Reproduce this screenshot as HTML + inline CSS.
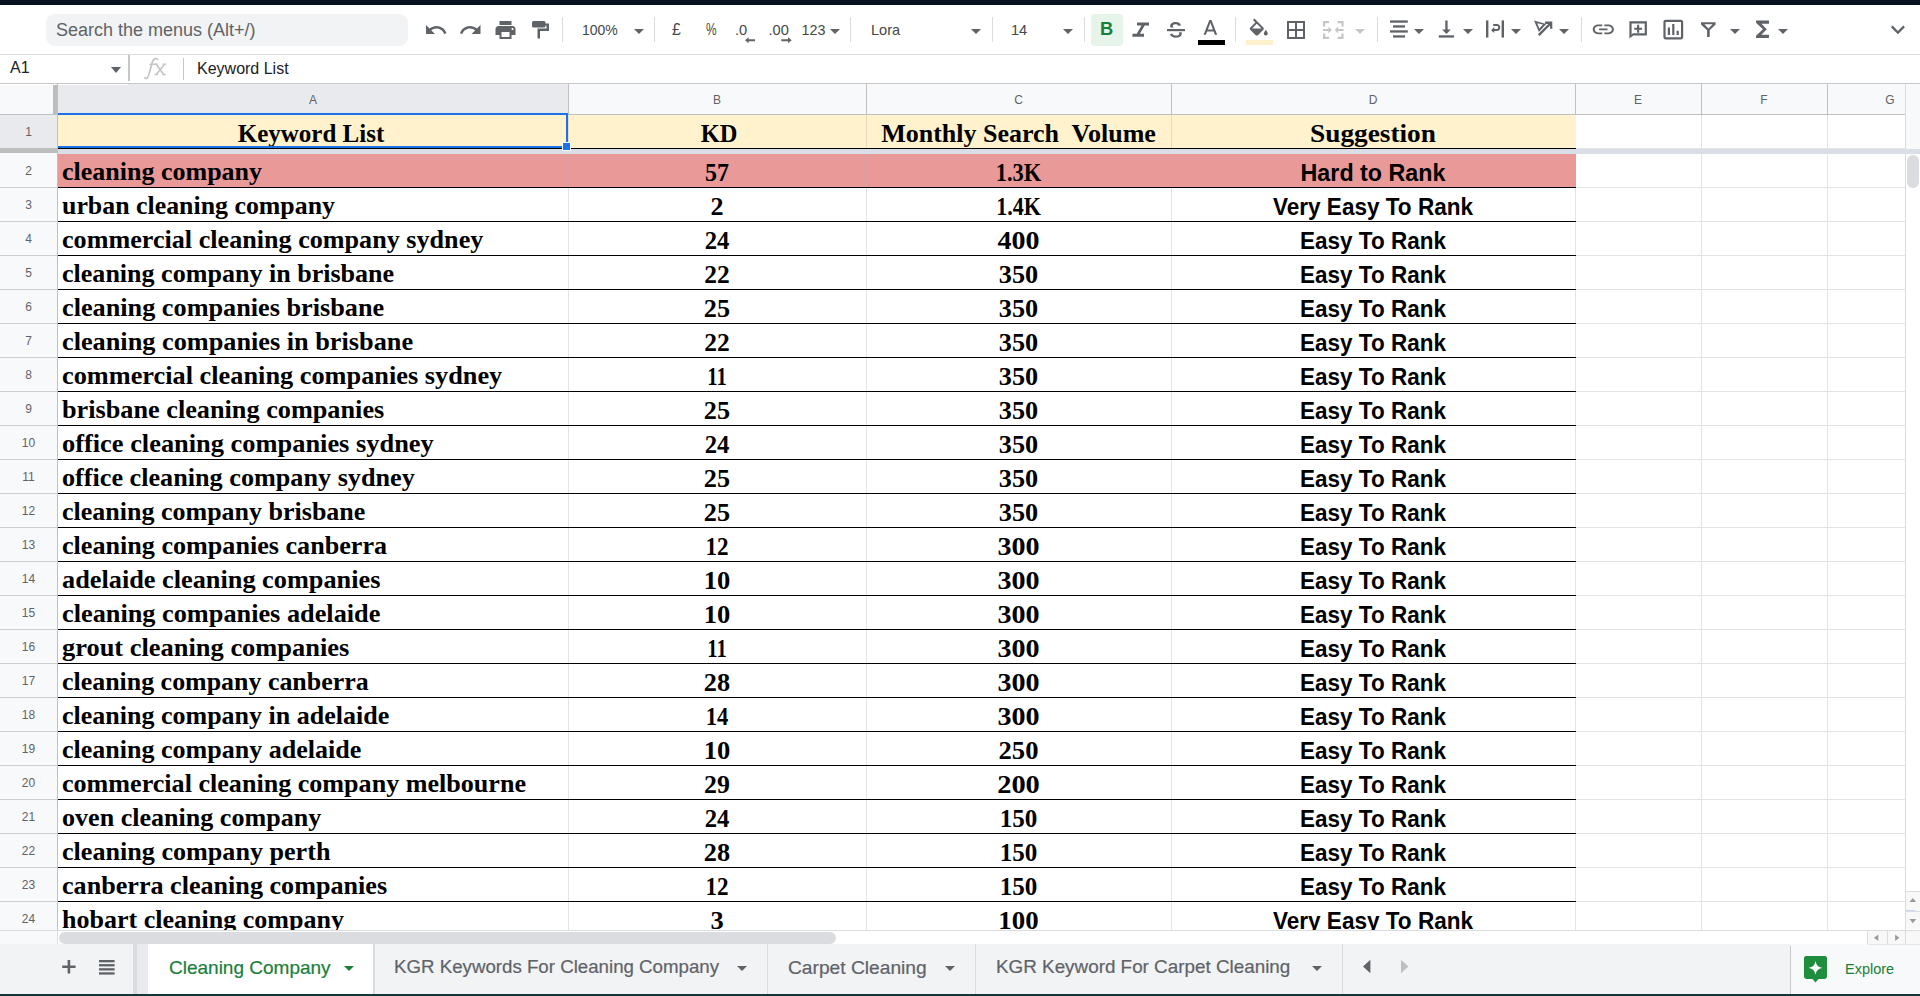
<!DOCTYPE html><html><head><meta charset="utf-8"><style>
*{box-sizing:border-box;margin:0;padding:0}
html,body{width:1920px;height:996px;overflow:hidden;background:#fff;position:relative;font-family:"Liberation Sans",sans-serif}
.a{position:absolute}
.t{position:absolute;white-space:nowrap;line-height:1}
.sep{position:absolute;width:1px;background:#dadce0;top:17px;height:25px}
.dd{position:absolute;width:0;height:0;border-left:5px solid transparent;border-right:5px solid transparent;border-top:5px solid #5f6368}
.cellA{position:absolute;white-space:nowrap;font-family:"Liberation Serif",serif;font-weight:bold;font-size:26px;color:#000;line-height:1}
.cellN{position:absolute;white-space:nowrap;font-family:"Liberation Serif",serif;font-weight:bold;font-size:25px;color:#000;line-height:1;text-align:center}
.cellD{position:absolute;white-space:nowrap;font-family:"Liberation Sans",sans-serif;font-weight:bold;font-size:23px;color:#000;line-height:1;text-align:center}
.rn{position:absolute;left:0;width:57px;text-align:center;font-size:12px;color:#5f6368;line-height:1}
.ch{position:absolute;top:94px;text-align:center;font-size:12px;color:#5f6368;line-height:1}
svg{position:absolute;overflow:visible}
</style></head><body>

<div class="a" style="left:0;top:0;width:1920px;height:5px;background:#08111f"></div>
<div class="a" style="left:0;top:54px;width:1920px;height:1px;background:#dadce0"></div>
<div class="a" style="left:46px;top:14px;width:362px;height:32px;border-radius:9px;background:#f1f3f4"></div>
<div class="t" style="left:56px;top:21px;font-size:18px;color:#5f6368">Search the menus (Alt+/)</div>
<div class="sep" style="left:562px"></div>
<div class="sep" style="left:654px"></div>
<div class="sep" style="left:850px"></div>
<div class="sep" style="left:992px"></div>
<div class="sep" style="left:1084px"></div>
<div class="sep" style="left:1235px"></div>
<div class="sep" style="left:1377px"></div>
<div class="sep" style="left:1581px"></div>
<div class="t" style="left:582px;top:23px;font-size:14px;color:#444746">100%</div>
<div class="dd" style="left:634px;top:29px"></div>
<div class="t" style="left:672px;top:22px;font-size:16px;color:#444746">&#163;</div>
<div class="t" style="left:706px;top:20.6px;font-size:16.5px;color:#444746;transform:scaleX(0.72);transform-origin:0 0">%</div>
<div class="t" style="left:735px;top:22.5px;font-size:14.6px;color:#444746">.0</div>
<div class="t" style="left:768.5px;top:22.5px;font-size:14.6px;color:#444746">.00</div>
<div class="t" style="left:801.5px;top:22.5px;font-size:14.3px;color:#444746">123</div>
<div class="dd" style="left:830px;top:29px"></div>
<div class="t" style="left:871px;top:23px;font-size:14.6px;color:#444746">Lora</div>
<div class="dd" style="left:971px;top:29px"></div>
<div class="t" style="left:1011px;top:23px;font-size:14.6px;color:#444746">14</div>
<div class="dd" style="left:1063px;top:29px"></div>
<div class="a" style="left:1091px;top:14px;width:32px;height:32px;border-radius:4px;background:#e6f4ea"></div>
<div class="t" style="left:1100px;top:20px;font-size:18.3px;font-weight:bold;color:#188038">B</div>
<div class="a" style="left:1198px;top:40px;width:27px;height:5px;background:#000"></div>
<div class="a" style="left:1246px;top:40px;width:27px;height:5px;background:#fef0cd"></div>
<div class="dd" style="left:1355px;top:29px;border-top-color:#c4c7c5"></div>
<div class="dd" style="left:1414px;top:29px"></div>
<div class="dd" style="left:1463px;top:29px"></div>
<div class="dd" style="left:1511px;top:29px"></div>
<div class="dd" style="left:1559px;top:29px"></div>
<div class="dd" style="left:1730px;top:29px"></div>
<div class="dd" style="left:1778px;top:29px"></div>
<svg style="left:0;top:0" width="1920" height="55" viewBox="0 0 1920 55" fill="#5f6368">
<path transform="translate(424,18)" d="M12.5 8c-2.65 0-5.05.99-6.9 2.6L2 7v9h9l-3.62-3.62c1.39-1.16 3.16-1.88 5.12-1.88 3.54 0 6.55 2.31 7.6 5.5l2.37-.78C21.08 11.030 17.15 8 12.5 8z"/>
<path transform="translate(458.5,18)" d="M18.4 10.6C16.55 8.99 14.15 8 11.5 8c-4.65 0-8.58 3.03-9.960 7.22L3.9 16c1.05-3.19 4.05-5.5 7.6-5.5 1.95 0 3.73.72 5.12 1.88L13 16h9V7l-3.6 3.6z"/>
<path transform="translate(493.5,18)" d="M19 8H5c-1.66 0-3 1.34-3 3v6h4v4h12v-4h4v-6c0-1.66-1.34-3-3-3zm-3 11H8v-5h8v5zm3-7c-.55 0-1-.45-1-1s.45-1 1-1 1 .45 1 1-.45 1-1 1zm-1-9H6v4h12V3z"/>
<path d="M533.5 21h10.5a1.5 1.5 0 0 1 1.5 1.5v.9h3.5v7.6h-9v7.5h-2.5v-10h9v-3.1h-1v.6a1.5 1.5 0 0 1-1.5 1.5h-10.5a1.5 1.5 0 0 1-1.5-1.5v-3.5a1.5 1.5 0 0 1 1.5-1.5z"/>
<path d="M745 40.25l3.6-3v1.9h6.4v2.2h-6.4v1.9z"/>
<path d="M791.7 40.25l-3.6-3v1.9h-6.8v2.2h6.8v1.9z"/>
<path d="M1137 22.5h12v2.9h-4.3l-4.8 8.4h4.1v2.9h-11.6v-2.9h4.3l4.8-8.4h-4.5z"/>
<rect x="1167" y="29" width="18" height="2.2"/>
<path d="M1170.6 27.6c-.3-.5-.4-1.1-.4-1.7 0-2.3 2.300-3.9 5.500-3.900 2.600 0 4.600 1.100 5.300 3.200l-2.4.8c-.5-1.200-1.600-1.800-3-1.800-1.700 0-2.800.7-2.800 1.700 0 .6.300 1.100 1.100 1.500z"/>
<path d="M1178.6 32.2c.5.4.7.9.7 1.5 0 1.100-1.200 1.900-3.300 1.900-1.800 0-3.200-.8-3.700-2.200l-2.4.9c.8 2.100 3 3.500 6.100 3.500 3.500 0 5.800-1.700 5.800-4.200 0-.5-.1-1-.3-1.400z"/>
<path transform="translate(1197.8,16.8) scale(1.05)" d="M11 3L5.5 17h2.25l1.12-3h6.25l1.12 3h2.25L13 3h-2zm-1.38 9L12 5.670 14.38 12H9.62z"/>
<path transform="translate(1246.8,18.6)" d="M16.56 8.94L7.62 0 6.21 1.41l2.38 2.38-5.15 5.15c-.59.59-.59 1.54 0 2.12l5.5 5.5c.29.29.68.44 1.06.44s.77-.15 1.06-.44l5.5-5.5c.59-.58.59-1.53 0-2.12zM5.21 10L10 5.21 14.79 10H5.21zM19 11.5s-2 2.17-2 3.5c0 1.1.9 2 2 2s2-.9 2-2c0-1.33-2-3.5-2-3.5z"/>
<path transform="translate(1284,18)" d="M3 3v18h18V3H3zm8 16H5v-6h6v6zm0-8H5V5h6v6zm8 8h-6v-6h6v6zm0-8h-6V5h6v6z"/>
<g fill="#c4c7c5">
<path d="M1323 21h6v2.2h-3.8v3.3h-2.2z M1343.6 21h-6v2.2h3.8v3.3h2.2z M1323 39h6v-2.2h-3.8v-3.3h-2.2z M1343.6 39h-6v-2.2h3.8v-3.3h2.2z"/>
<path d="M1323 28.9h5.5v-2.4l3.3 3.5-3.3 3.5v-2.4h-5.5z M1343.6 28.9h-5.5v-2.4l-3.3 3.5 3.3 3.5v-2.4h5.5z"/>
</g>
<rect x="1390" y="20.4" width="17.8" height="2.3"/><rect x="1393" y="25.3" width="12" height="2.3"/><rect x="1390" y="30.3" width="17.8" height="2.3"/><rect x="1393" y="35.3" width="12" height="2.3"/>
<path d="M1445.3 20.4h2.3v9.2h3.2l-4.35 4.3-4.35-4.3h3.2z"/><rect x="1438.8" y="35.3" width="15.2" height="2.3"/>
<rect x="1486" y="20.4" width="2.4" height="17.2"/><rect x="1501.6" y="20.4" width="2.4" height="17.2"/>
<path d="M1491 30.2l3.3-3.3v2.1h2.7c.7 0 1.2-.5 1.2-1.2v-.6c0-.7-.5-1.2-1.2-1.2h-3.8v-2h3.8c1.8 0 3.2 1.400 3.2 3.200v.6c0 1.8-1.4 3.2-3.2 3.2h-2.7v2.1z"/>
<path d="M1534 20.4l12.2 3.6-7.3 8.1z M1537.3 23.3l2 5.3 3.7-4.1z" fill-rule="evenodd"/>
<path d="M1539.6 36l10.4-10.4v3.2h2.3v-7.200h-7.200v2.300h3.200l-10.400 10.400z"/>
<path transform="translate(1590.6,17.6) scale(1.06,0.98)" d="M3.9 12c0-1.71 1.39-3.1 3.1-3.1h4V7H7c-2.76 0-5 2.24-5 5s2.24 5 5 5h4v-1.9H7c-1.71 0-3.1-1.39-3.1-3.1zM8 13h8v-2H8v2zm9-6h-4v1.9h4c1.71 0 3.1 1.39 3.1 3.1s-1.39 3.1-3.1 3.1h-4V17h4c2.76 0 5-2.24 5-5s-2.24-5-5-5z"/>
<path d="M1629.4 21.2h17.5v14.300h-13.700l-3.800 3.000z M1631.600 23.400v11.300l1.200-1.400h11.900v-9.900z" fill-rule="evenodd"/>
<path d="M1637.1 24.8h2.1v2.9h2.9v2.1h-2.9v2.9h-2.1v-2.900h-2.900v-2.100h2.900z"/>
<path transform="translate(1660.1,16.4) scale(1.1)" d="M9 17H7v-7h2v7zm4 0h-2V7h2v10zm4 0h-2v-4h2v4zm2 2H5V5h14v14zm0-16H5c-1.1 0-2 .9-2 2v14c0 1.1.9 2 2 2h14c1.1 0 2-.9 2-2V5c0-1.1-.9-2-2-2z"/>
<path d="M1701 22.2h14.6v2.2l-5.9 5.9v6.6h-2.6v-6.6l-6.1-5.900z M1704.400 24.300l4.100 4.100 4.100-4.100z" fill-rule="evenodd"/>
<path transform="translate(1749.5,16.3) scale(1.08)" d="M18 4H6v2l6.5 6L6 18v2h12v-3h-7l5-5-5-5h7z"/>
<path transform="translate(1884,15.6) scale(1.16)" d="M16.59 8.59L12 13.17 7.41 8.59 6 10l6 6 6-6z"/>
</svg>
<div class="a" style="left:0;top:83px;width:1920px;height:1px;background:#c7c7c7"></div>
<div class="t" style="left:10px;top:60px;font-size:16px;color:#202124">A1</div>
<div class="dd" style="left:111px;top:67px;border-top-color:#5f6368;border-left-width:5px;border-right-width:5px;border-top-width:6px"></div>
<div class="a" style="left:128px;top:55px;width:2px;height:26px;background:#c7c7c7"></div>
<div class="a" style="left:183px;top:58px;width:1px;height:22px;background:#c7c7c7"></div>
<svg style="left:0;top:0" width="200" height="84" viewBox="0 0 200 84" fill="none" stroke="#c4c4c4"><path d="M144.3 77.2c.7 1.3 2 1.6 3 .7 1-.9 1.5-2.6 2-5l3.1-10.8c.6-2.2 1.700-3.600 3.300-3.600 1.100 0 1.900.5 2.400 1.300" stroke-width="1.7"/><path d="M149.3 64.3h6.2" stroke-width="1.3"/><path d="M156.2 64.2l7.6 10.300M164.600 64.200l-8.400 10.300" stroke-width="1.6"/><path d="M154.6 64.1h3.2M162.6 64.1h3.6M154.4 74.6h3.4M162.4 74.6h3.4" stroke-width="1.1"/></svg>
<div class="t" style="left:197px;top:61px;font-size:16px;color:#202124">Keyword List</div>
<div class="a" style="left:0;top:84px;width:1905px;height:30px;background:#f8f9fa"></div>
<div class="a" style="left:58px;top:84px;width:510px;height:30px;background:#e8eaed"></div>
<div class="a" style="left:0;top:114px;width:1905px;height:1px;background:#c0c0c0"></div>
<div class="a" style="left:568px;top:84px;width:1px;height:30px;background:#c0c0c0"></div>
<div class="a" style="left:866px;top:84px;width:1px;height:30px;background:#c0c0c0"></div>
<div class="a" style="left:1171px;top:84px;width:1px;height:30px;background:#c0c0c0"></div>
<div class="a" style="left:1575px;top:84px;width:1px;height:30px;background:#c0c0c0"></div>
<div class="a" style="left:1701px;top:84px;width:1px;height:30px;background:#c0c0c0"></div>
<div class="a" style="left:1827px;top:84px;width:1px;height:30px;background:#c0c0c0"></div>
<div class="ch" style="left:58px;width:510px">A</div>
<div class="ch" style="left:568px;width:298px">B</div>
<div class="ch" style="left:866px;width:305px">C</div>
<div class="ch" style="left:1171px;width:404px">D</div>
<div class="ch" style="left:1575px;width:126px">E</div>
<div class="ch" style="left:1701px;width:126px">F</div>
<div class="ch" style="left:1827px;width:126px">G</div>
<div class="a" style="left:0;top:84px;width:128px;height:1px;background:#fff"></div>
<div class="a" style="left:0;top:115px;width:57px;height:815px;background:#f8f9fa"></div>
<div class="a" style="left:0;top:115px;width:57px;height:33px;background:#e8eaed"></div>
<div class="a" style="left:57px;top:84px;width:1px;height:846px;background:#c0c0c0"></div>
<div class="a" style="left:53px;top:85px;width:4px;height:29px;background:#bdbdbd"></div>
<div class="a" style="left:0;top:148px;width:57px;height:5px;background:#bdbdbd"></div>
<div class="a" style="left:568px;top:115px;width:1px;height:34px;background:#e2e3e3"></div>
<div class="a" style="left:568px;top:154px;width:1px;height:776px;background:#e2e3e3"></div>
<div class="a" style="left:866px;top:115px;width:1px;height:34px;background:#e2e3e3"></div>
<div class="a" style="left:866px;top:154px;width:1px;height:776px;background:#e2e3e3"></div>
<div class="a" style="left:1171px;top:115px;width:1px;height:34px;background:#e2e3e3"></div>
<div class="a" style="left:1171px;top:154px;width:1px;height:776px;background:#e2e3e3"></div>
<div class="a" style="left:1575px;top:115px;width:1px;height:34px;background:#e2e3e3"></div>
<div class="a" style="left:1575px;top:154px;width:1px;height:776px;background:#e2e3e3"></div>
<div class="a" style="left:1701px;top:115px;width:1px;height:34px;background:#e2e3e3"></div>
<div class="a" style="left:1701px;top:154px;width:1px;height:776px;background:#e2e3e3"></div>
<div class="a" style="left:1827px;top:115px;width:1px;height:34px;background:#e2e3e3"></div>
<div class="a" style="left:1827px;top:154px;width:1px;height:776px;background:#e2e3e3"></div>
<div class="a" style="left:58px;top:115px;width:1518px;height:33px;background:#fff2cc"></div>
<div class="a" style="left:58px;top:148px;width:1518px;height:1px;background:#000"></div>
<div class="a" style="left:1576px;top:148px;width:329px;height:1px;background:#e2e3e3"></div>
<div class="a" style="left:58px;top:149px;width:1847px;height:5px;background:#dadfe7"></div>
<div class="rn" style="top:126px">1</div>
<div class="a" style="left:568px;top:115px;width:1px;height:33px;background:#e6dcc0"></div>
<div class="a" style="left:866px;top:115px;width:1px;height:33px;background:#e6dcc0"></div>
<div class="a" style="left:1171px;top:115px;width:1px;height:33px;background:#e6dcc0"></div>
<div class="a" style="left:58px;top:154px;width:1518px;height:33px;background:#ea9999"></div>
<div class="a" style="left:568px;top:154px;width:1px;height:33px;background:#d8a0a0"></div>
<div class="a" style="left:866px;top:154px;width:1px;height:33px;background:#d8a0a0"></div>
<div class="a" style="left:1171px;top:154px;width:1px;height:33px;background:#d8a0a0"></div>
<div class="a" style="left:58px;top:187px;width:1518px;height:1px;background:#000"></div>
<div class="a" style="left:1576px;top:187px;width:329px;height:1px;background:#e2e3e3"></div>
<div class="a" style="left:0;top:187px;width:57px;height:1px;background:#cdcdcd"></div>
<div class="rn" style="top:165px">2</div>
<div class="cellA" style="left:62px;top:159px;transform:scaleX(1.0);transform-origin:1px 0">cleaning company</div>
<div class="cellN" style="left:568px;width:298px;top:160px;transform:scaleX(0.957)">57</div>
<div class="cellN" style="left:866px;width:305px;top:160px;transform:scaleX(0.9)">1.3K</div>
<div class="cellD" style="left:1171px;width:404px;top:162px;transform:scaleX(1.012)">Hard to Rank</div>
<div class="a" style="left:58px;top:221px;width:1518px;height:1px;background:#000"></div>
<div class="a" style="left:1576px;top:221px;width:329px;height:1px;background:#e2e3e3"></div>
<div class="a" style="left:0;top:221px;width:57px;height:1px;background:#cdcdcd"></div>
<div class="rn" style="top:199px">3</div>
<div class="cellA" style="left:62px;top:193px;transform:scaleX(0.9945);transform-origin:1px 0">urban cleaning company</div>
<div class="cellN" style="left:568px;width:298px;top:194px;transform:scaleX(1.045)">2</div>
<div class="cellN" style="left:866px;width:305px;top:194px;transform:scaleX(0.881)">1.4K</div>
<div class="cellD" style="left:1171px;width:404px;top:196px;transform:scaleX(0.98)">Very Easy To Rank</div>
<div class="a" style="left:58px;top:255px;width:1518px;height:1px;background:#000"></div>
<div class="a" style="left:1576px;top:255px;width:329px;height:1px;background:#e2e3e3"></div>
<div class="a" style="left:0;top:255px;width:57px;height:1px;background:#cdcdcd"></div>
<div class="rn" style="top:233px">4</div>
<div class="cellA" style="left:62px;top:227px;transform:scaleX(1.0053);transform-origin:1px 0">commercial cleaning company sydney</div>
<div class="cellN" style="left:568px;width:298px;top:228px;transform:scaleX(0.988)">24</div>
<div class="cellN" style="left:866px;width:305px;top:228px;transform:scaleX(1.12)">400</div>
<div class="cellD" style="left:1171px;width:404px;top:230px;transform:scaleX(0.978)">Easy To Rank</div>
<div class="a" style="left:58px;top:289px;width:1518px;height:1px;background:#000"></div>
<div class="a" style="left:1576px;top:289px;width:329px;height:1px;background:#e2e3e3"></div>
<div class="a" style="left:0;top:289px;width:57px;height:1px;background:#cdcdcd"></div>
<div class="rn" style="top:267px">5</div>
<div class="cellA" style="left:62px;top:261px;transform:scaleX(1.0018);transform-origin:1px 0">cleaning company in brisbane</div>
<div class="cellN" style="left:568px;width:298px;top:262px;transform:scaleX(1.02)">22</div>
<div class="cellN" style="left:866px;width:305px;top:262px;transform:scaleX(1.05)">350</div>
<div class="cellD" style="left:1171px;width:404px;top:264px;transform:scaleX(0.978)">Easy To Rank</div>
<div class="a" style="left:58px;top:323px;width:1518px;height:1px;background:#000"></div>
<div class="a" style="left:1576px;top:323px;width:329px;height:1px;background:#e2e3e3"></div>
<div class="a" style="left:0;top:323px;width:57px;height:1px;background:#cdcdcd"></div>
<div class="rn" style="top:301px">6</div>
<div class="cellA" style="left:62px;top:295px;transform:scaleX(1.0094);transform-origin:1px 0">cleaning companies brisbane</div>
<div class="cellN" style="left:568px;width:298px;top:296px;transform:scaleX(1.05)">25</div>
<div class="cellN" style="left:866px;width:305px;top:296px;transform:scaleX(1.05)">350</div>
<div class="cellD" style="left:1171px;width:404px;top:298px;transform:scaleX(0.978)">Easy To Rank</div>
<div class="a" style="left:58px;top:357px;width:1518px;height:1px;background:#000"></div>
<div class="a" style="left:1576px;top:357px;width:329px;height:1px;background:#e2e3e3"></div>
<div class="a" style="left:0;top:357px;width:57px;height:1px;background:#cdcdcd"></div>
<div class="rn" style="top:335px">7</div>
<div class="cellA" style="left:62px;top:329px;transform:scaleX(1.0104);transform-origin:1px 0">cleaning companies in brisbane</div>
<div class="cellN" style="left:568px;width:298px;top:330px;transform:scaleX(1.02)">22</div>
<div class="cellN" style="left:866px;width:305px;top:330px;transform:scaleX(1.05)">350</div>
<div class="cellD" style="left:1171px;width:404px;top:332px;transform:scaleX(0.978)">Easy To Rank</div>
<div class="a" style="left:58px;top:391px;width:1518px;height:1px;background:#000"></div>
<div class="a" style="left:1576px;top:391px;width:329px;height:1px;background:#e2e3e3"></div>
<div class="a" style="left:0;top:391px;width:57px;height:1px;background:#cdcdcd"></div>
<div class="rn" style="top:369px">8</div>
<div class="cellA" style="left:62px;top:363px;transform:scaleX(1.0122);transform-origin:1px 0">commercial cleaning companies sydney</div>
<div class="cellN" style="left:568px;width:298px;top:364px;transform:scaleX(0.825)">11</div>
<div class="cellN" style="left:866px;width:305px;top:364px;transform:scaleX(1.05)">350</div>
<div class="cellD" style="left:1171px;width:404px;top:366px;transform:scaleX(0.978)">Easy To Rank</div>
<div class="a" style="left:58px;top:425px;width:1518px;height:1px;background:#000"></div>
<div class="a" style="left:1576px;top:425px;width:329px;height:1px;background:#e2e3e3"></div>
<div class="a" style="left:0;top:425px;width:57px;height:1px;background:#cdcdcd"></div>
<div class="rn" style="top:403px">9</div>
<div class="cellA" style="left:62px;top:397px;transform:scaleX(1.0094);transform-origin:1px 0">brisbane cleaning companies</div>
<div class="cellN" style="left:568px;width:298px;top:398px;transform:scaleX(1.05)">25</div>
<div class="cellN" style="left:866px;width:305px;top:398px;transform:scaleX(1.05)">350</div>
<div class="cellD" style="left:1171px;width:404px;top:400px;transform:scaleX(0.978)">Easy To Rank</div>
<div class="a" style="left:58px;top:459px;width:1518px;height:1px;background:#000"></div>
<div class="a" style="left:1576px;top:459px;width:329px;height:1px;background:#e2e3e3"></div>
<div class="a" style="left:0;top:459px;width:57px;height:1px;background:#cdcdcd"></div>
<div class="rn" style="top:437px">10</div>
<div class="cellA" style="left:62px;top:431px;transform:scaleX(1.0153);transform-origin:1px 0">office cleaning companies sydney</div>
<div class="cellN" style="left:568px;width:298px;top:432px;transform:scaleX(0.988)">24</div>
<div class="cellN" style="left:866px;width:305px;top:432px;transform:scaleX(1.05)">350</div>
<div class="cellD" style="left:1171px;width:404px;top:434px;transform:scaleX(0.978)">Easy To Rank</div>
<div class="a" style="left:58px;top:493px;width:1518px;height:1px;background:#000"></div>
<div class="a" style="left:1576px;top:493px;width:329px;height:1px;background:#e2e3e3"></div>
<div class="a" style="left:0;top:493px;width:57px;height:1px;background:#cdcdcd"></div>
<div class="rn" style="top:471px">11</div>
<div class="cellA" style="left:62px;top:465px;transform:scaleX(1.0072);transform-origin:1px 0">office cleaning company sydney</div>
<div class="cellN" style="left:568px;width:298px;top:466px;transform:scaleX(1.05)">25</div>
<div class="cellN" style="left:866px;width:305px;top:466px;transform:scaleX(1.05)">350</div>
<div class="cellD" style="left:1171px;width:404px;top:468px;transform:scaleX(0.978)">Easy To Rank</div>
<div class="a" style="left:58px;top:527px;width:1518px;height:1px;background:#000"></div>
<div class="a" style="left:1576px;top:527px;width:329px;height:1px;background:#e2e3e3"></div>
<div class="a" style="left:0;top:527px;width:57px;height:1px;background:#cdcdcd"></div>
<div class="rn" style="top:505px">12</div>
<div class="cellA" style="left:62px;top:499px;transform:scaleX(1.0);transform-origin:1px 0">cleaning company brisbane</div>
<div class="cellN" style="left:568px;width:298px;top:500px;transform:scaleX(1.05)">25</div>
<div class="cellN" style="left:866px;width:305px;top:500px;transform:scaleX(1.05)">350</div>
<div class="cellD" style="left:1171px;width:404px;top:502px;transform:scaleX(0.978)">Easy To Rank</div>
<div class="a" style="left:58px;top:561px;width:1518px;height:1px;background:#000"></div>
<div class="a" style="left:1576px;top:561px;width:329px;height:1px;background:#e2e3e3"></div>
<div class="a" style="left:0;top:561px;width:57px;height:1px;background:#cdcdcd"></div>
<div class="rn" style="top:539px">13</div>
<div class="cellA" style="left:62px;top:533px;transform:scaleX(1.0047);transform-origin:1px 0">cleaning companies canberra</div>
<div class="cellN" style="left:568px;width:298px;top:534px;transform:scaleX(0.924)">12</div>
<div class="cellN" style="left:866px;width:305px;top:534px;transform:scaleX(1.124)">300</div>
<div class="cellD" style="left:1171px;width:404px;top:536px;transform:scaleX(0.978)">Easy To Rank</div>
<div class="a" style="left:58px;top:595px;width:1518px;height:1px;background:#000"></div>
<div class="a" style="left:1576px;top:595px;width:329px;height:1px;background:#e2e3e3"></div>
<div class="a" style="left:0;top:595px;width:57px;height:1px;background:#cdcdcd"></div>
<div class="rn" style="top:573px">14</div>
<div class="cellA" style="left:62px;top:567px;transform:scaleX(1.0112);transform-origin:1px 0">adelaide cleaning companies</div>
<div class="cellN" style="left:568px;width:298px;top:568px;transform:scaleX(1.062)">10</div>
<div class="cellN" style="left:866px;width:305px;top:568px;transform:scaleX(1.124)">300</div>
<div class="cellD" style="left:1171px;width:404px;top:570px;transform:scaleX(0.978)">Easy To Rank</div>
<div class="a" style="left:58px;top:629px;width:1518px;height:1px;background:#000"></div>
<div class="a" style="left:1576px;top:629px;width:329px;height:1px;background:#e2e3e3"></div>
<div class="a" style="left:0;top:629px;width:57px;height:1px;background:#cdcdcd"></div>
<div class="rn" style="top:607px">15</div>
<div class="cellA" style="left:62px;top:601px;transform:scaleX(1.0112);transform-origin:1px 0">cleaning companies adelaide</div>
<div class="cellN" style="left:568px;width:298px;top:602px;transform:scaleX(1.062)">10</div>
<div class="cellN" style="left:866px;width:305px;top:602px;transform:scaleX(1.124)">300</div>
<div class="cellD" style="left:1171px;width:404px;top:604px;transform:scaleX(0.978)">Easy To Rank</div>
<div class="a" style="left:58px;top:663px;width:1518px;height:1px;background:#000"></div>
<div class="a" style="left:1576px;top:663px;width:329px;height:1px;background:#e2e3e3"></div>
<div class="a" style="left:0;top:663px;width:57px;height:1px;background:#cdcdcd"></div>
<div class="rn" style="top:641px">16</div>
<div class="cellA" style="left:62px;top:635px;transform:scaleX(1.0167);transform-origin:1px 0">grout cleaning companies</div>
<div class="cellN" style="left:568px;width:298px;top:636px;transform:scaleX(0.825)">11</div>
<div class="cellN" style="left:866px;width:305px;top:636px;transform:scaleX(1.124)">300</div>
<div class="cellD" style="left:1171px;width:404px;top:638px;transform:scaleX(0.978)">Easy To Rank</div>
<div class="a" style="left:58px;top:697px;width:1518px;height:1px;background:#000"></div>
<div class="a" style="left:1576px;top:697px;width:329px;height:1px;background:#e2e3e3"></div>
<div class="a" style="left:0;top:697px;width:57px;height:1px;background:#cdcdcd"></div>
<div class="rn" style="top:675px">17</div>
<div class="cellA" style="left:62px;top:669px;transform:scaleX(0.9967);transform-origin:1px 0">cleaning company canberra</div>
<div class="cellN" style="left:568px;width:298px;top:670px;transform:scaleX(1.05)">28</div>
<div class="cellN" style="left:866px;width:305px;top:670px;transform:scaleX(1.124)">300</div>
<div class="cellD" style="left:1171px;width:404px;top:672px;transform:scaleX(0.978)">Easy To Rank</div>
<div class="a" style="left:58px;top:731px;width:1518px;height:1px;background:#000"></div>
<div class="a" style="left:1576px;top:731px;width:329px;height:1px;background:#e2e3e3"></div>
<div class="a" style="left:0;top:731px;width:57px;height:1px;background:#cdcdcd"></div>
<div class="rn" style="top:709px">18</div>
<div class="cellA" style="left:62px;top:703px;transform:scaleX(1.0);transform-origin:1px 0">cleaning company in adelaide</div>
<div class="cellN" style="left:568px;width:298px;top:704px;transform:scaleX(0.906)">14</div>
<div class="cellN" style="left:866px;width:305px;top:704px;transform:scaleX(1.124)">300</div>
<div class="cellD" style="left:1171px;width:404px;top:706px;transform:scaleX(0.978)">Easy To Rank</div>
<div class="a" style="left:58px;top:765px;width:1518px;height:1px;background:#000"></div>
<div class="a" style="left:1576px;top:765px;width:329px;height:1px;background:#e2e3e3"></div>
<div class="a" style="left:0;top:765px;width:57px;height:1px;background:#cdcdcd"></div>
<div class="rn" style="top:743px">19</div>
<div class="cellA" style="left:62px;top:737px;transform:scaleX(1.0007);transform-origin:1px 0">cleaning company adelaide</div>
<div class="cellN" style="left:568px;width:298px;top:738px;transform:scaleX(1.062)">10</div>
<div class="cellN" style="left:866px;width:305px;top:738px;transform:scaleX(1.064)">250</div>
<div class="cellD" style="left:1171px;width:404px;top:740px;transform:scaleX(0.978)">Easy To Rank</div>
<div class="a" style="left:58px;top:799px;width:1518px;height:1px;background:#000"></div>
<div class="a" style="left:1576px;top:799px;width:329px;height:1px;background:#e2e3e3"></div>
<div class="a" style="left:0;top:799px;width:57px;height:1px;background:#cdcdcd"></div>
<div class="rn" style="top:777px">20</div>
<div class="cellA" style="left:62px;top:771px;transform:scaleX(1.0035);transform-origin:1px 0">commercial cleaning company melbourne</div>
<div class="cellN" style="left:568px;width:298px;top:772px;transform:scaleX(1.034)">29</div>
<div class="cellN" style="left:866px;width:305px;top:772px;transform:scaleX(1.139)">200</div>
<div class="cellD" style="left:1171px;width:404px;top:774px;transform:scaleX(0.978)">Easy To Rank</div>
<div class="a" style="left:58px;top:833px;width:1518px;height:1px;background:#000"></div>
<div class="a" style="left:1576px;top:833px;width:329px;height:1px;background:#e2e3e3"></div>
<div class="a" style="left:0;top:833px;width:57px;height:1px;background:#cdcdcd"></div>
<div class="rn" style="top:811px">21</div>
<div class="cellA" style="left:62px;top:805px;transform:scaleX(1.0027);transform-origin:1px 0">oven cleaning company</div>
<div class="cellN" style="left:568px;width:298px;top:806px;transform:scaleX(0.988)">24</div>
<div class="cellN" style="left:866px;width:305px;top:806px;transform:scaleX(1.003)">150</div>
<div class="cellD" style="left:1171px;width:404px;top:808px;transform:scaleX(0.978)">Easy To Rank</div>
<div class="a" style="left:58px;top:867px;width:1518px;height:1px;background:#000"></div>
<div class="a" style="left:1576px;top:867px;width:329px;height:1px;background:#e2e3e3"></div>
<div class="a" style="left:0;top:867px;width:57px;height:1px;background:#cdcdcd"></div>
<div class="rn" style="top:845px">22</div>
<div class="cellA" style="left:62px;top:839px;transform:scaleX(1.0045);transform-origin:1px 0">cleaning company perth</div>
<div class="cellN" style="left:568px;width:298px;top:840px;transform:scaleX(1.05)">28</div>
<div class="cellN" style="left:866px;width:305px;top:840px;transform:scaleX(1.003)">150</div>
<div class="cellD" style="left:1171px;width:404px;top:842px;transform:scaleX(0.978)">Easy To Rank</div>
<div class="a" style="left:58px;top:901px;width:1518px;height:1px;background:#000"></div>
<div class="a" style="left:1576px;top:901px;width:329px;height:1px;background:#e2e3e3"></div>
<div class="a" style="left:0;top:901px;width:57px;height:1px;background:#cdcdcd"></div>
<div class="rn" style="top:879px">23</div>
<div class="cellA" style="left:62px;top:873px;transform:scaleX(1.0047);transform-origin:1px 0">canberra cleaning companies</div>
<div class="cellN" style="left:568px;width:298px;top:874px;transform:scaleX(0.924)">12</div>
<div class="cellN" style="left:866px;width:305px;top:874px;transform:scaleX(1.003)">150</div>
<div class="cellD" style="left:1171px;width:404px;top:876px;transform:scaleX(0.978)">Easy To Rank</div>
<div class="rn" style="top:913px">24</div>
<div class="cellA" style="left:62px;top:907px;transform:scaleX(1.0011);transform-origin:1px 0">hobart cleaning company</div>
<div class="cellN" style="left:568px;width:298px;top:908px;transform:scaleX(1.058)">3</div>
<div class="cellN" style="left:866px;width:305px;top:908px;transform:scaleX(1.074)">100</div>
<div class="cellD" style="left:1171px;width:404px;top:910px;transform:scaleX(0.98)">Very Easy To Rank</div>
<div class="cellA" style="left:56px;width:510px;text-align:center;top:121px;transform:scaleX(0.962)">Keyword List</div>
<div class="cellA" style="left:570px;width:298px;text-align:center;top:121px;transform:scaleX(0.94)">KD</div>
<div class="cellA" style="left:866px;width:305px;text-align:center;top:121px">Monthly Search&nbsp; Volume</div>
<div class="cellA" style="left:1171px;width:404px;text-align:center;top:121px;transform:scaleX(1.05)">Suggestion</div>
<div class="a" style="left:58px;top:113px;width:510px;height:2px;background:#1a73e8"></div>
<div class="a" style="left:58px;top:146px;width:510px;height:2px;background:#1a73e8"></div>
<div class="a" style="left:566px;top:113px;width:2px;height:35px;background:#1a73e8"></div>
<div class="a" style="left:562px;top:142px;width:9px;height:9px;background:#1a73e8;border:1px solid #fff"></div>
<div class="a" style="left:1905px;top:84px;width:15px;height:846px;background:#fff;border-left:1px solid #dadce0"></div>
<div class="a" style="left:1906px;top:84px;width:14px;height:65px;background:#f8f9fa"></div>
<div class="a" style="left:1905px;top:149px;width:15px;height:5px;background:#dadfe7"></div>
<div class="a" style="left:1907px;top:155px;width:12px;height:33px;border-radius:6px;background:#dadce0"></div>
<div class="a" style="left:0;top:930px;width:1920px;height:1px;background:#dadce0"></div>
<div class="a" style="left:0;top:931px;width:1920px;height:13px;background:#fff"></div>
<div class="a" style="left:0;top:931px;width:57px;height:13px;background:#f8f9fa"></div>
<div class="a" style="left:57px;top:931px;width:1px;height:13px;background:#dadce0"></div>
<div class="a" style="left:59px;top:932px;width:777px;height:12px;border-radius:6px;background:#dadce0"></div>
<div class="a" style="left:0;top:944px;width:1920px;height:50px;background:#f1f3f4"></div>
<div class="a" style="left:0;top:994px;width:1920px;height:2px;background:#15353d"></div>
<svg style="left:0;top:944px" width="200" height="50" viewBox="0 944 200 50" fill="#5f6368"><path d="M67.6 960h2.6v5.4h5.4v2.6h-5.4v5.4h-2.6v-5.4h-5.4v-2.6h5.4z"/><rect x="99" y="960" width="15.6" height="2.3"/><rect x="99" y="964.1" width="15.6" height="2.3"/><rect x="99" y="968.2" width="15.6" height="2.3"/><rect x="99" y="972.3" width="15.6" height="2.3"/></svg>
<div class="a" style="left:133px;top:944px;width:4px;height:50px;background:#dadce0"></div>
<div class="a" style="left:137px;top:944px;width:11px;height:50px;background:#e8eaed"></div>
<div class="a" style="left:148px;top:944px;width:225px;height:50px;background:#fff"></div>
<div class="t" style="left:169px;top:958px;-webkit-text-stroke:0.2px currentColor;font-size:19px;color:#188038">Cleaning Company</div>
<div class="dd" style="left:344px;top:966px;border-top-color:#188038"></div>
<div class="a" style="left:373px;top:944px;width:2px;height:50px;background:#dadce0"></div>
<div class="t" style="left:394px;top:958px;-webkit-text-stroke:0.2px currentColor;font-size:18.7px;color:#5f6368">KGR Keywords For Cleaning Company</div>
<div class="dd" style="left:737px;top:966px"></div>
<div class="a" style="left:767px;top:944px;width:1px;height:50px;background:#dadce0"></div>
<div class="t" style="left:788px;top:958px;-webkit-text-stroke:0.2px currentColor;font-size:19.2px;color:#5f6368">Carpet Cleaning</div>
<div class="dd" style="left:945px;top:966px"></div>
<div class="a" style="left:975px;top:944px;width:1px;height:50px;background:#dadce0"></div>
<div class="t" style="left:996px;top:958px;-webkit-text-stroke:0.2px currentColor;font-size:18.85px;color:#5f6368">KGR Keyword For Carpet Cleaning</div>
<div class="dd" style="left:1312px;top:966px"></div>
<div class="a" style="left:1342px;top:944px;width:1px;height:50px;background:#dadce0"></div>
<div class="a" style="left:1790px;top:946px;width:1px;height:48px;background:#c8c8c8"></div>
<div class="a" style="left:1791px;top:944px;width:129px;height:50px;background:#f8f9fa"></div>
<div class="a" style="left:1804px;top:956px;width:23px;height:22px;border-radius:3px;background:#1e8e3e"></div>
<div class="t" style="left:1845px;top:961.5px;font-size:14.5px;color:#188038">Explore</div>
<svg style="left:1340px;top:944px" width="100" height="50" viewBox="1340 944 100 50"><path d="M1370.4 959.8v13.5l-7.4-6.75z" fill="#5f6368"/><path d="M1401 959.8v13.5l7.4-6.75z" fill="#bdc1c6"/></svg>
<svg style="left:1800px;top:950px" width="40" height="40" viewBox="1800 950 40 40"><path d="M1807 956h17a3 3 0 0 1 3 3v17a3 3 0 0 1-3 3h-5.5l-3 3.5-3-3.5h-5.5a3 3 0 0 1-3-3v-17a3 3 0 0 1 3-3z" fill="#1e8e3e"/><path d="M1815.5 960.8c.8 4.6 2.5 6.4 7.1 7.1-4.6.8-6.4 2.5-7.1 7.1-.8-4.6-2.5-6.4-7.1-7.1 4.6-.8 6.4-2.5 7.1-7.1z" fill="#fff"/></svg>
<div class="a" style="left:1906px;top:892px;width:14px;height:37px;background:#f8f8f8"></div>
<div class="a" style="left:1868px;top:931px;width:52px;height:13px;background:#f8f8f8"></div>
<div class="a" style="left:1867px;top:931px;width:1px;height:13px;background:#dcdcdc"></div>
<div class="a" style="left:1887px;top:931px;width:1px;height:13px;background:#dcdcdc"></div>
<div class="a" style="left:1905px;top:929px;width:1px;height:15px;background:#dcdcdc"></div>
<div class="a" style="left:1868px;top:944px;width:52px;height:1px;background:#e6e6e6"></div>
<div class="a" style="left:1905px;top:891px;width:15px;height:1px;background:#dcdcdc"></div>
<div class="a" style="left:1906px;top:911px;width:14px;height:1px;background:#dcdcdc"></div>
<div class="a" style="left:1906px;top:910px;width:9px;height:1px;background:#c6d4f5"></div>
<svg style="left:1860px;top:885px" width="60" height="60" viewBox="1860 885 60 60" fill="#9a9a9a"><path d="M1874 937.8l4.3-3.300v6.600z"/><path d="M1899.4 937.8l-4.3-3.300v6.600z"/><path d="M1909.5 902.1h6.700l-3.350-4.200z"/><path d="M1909.5 919h6.700l-3.350 4.200z"/></svg>
</body></html>
